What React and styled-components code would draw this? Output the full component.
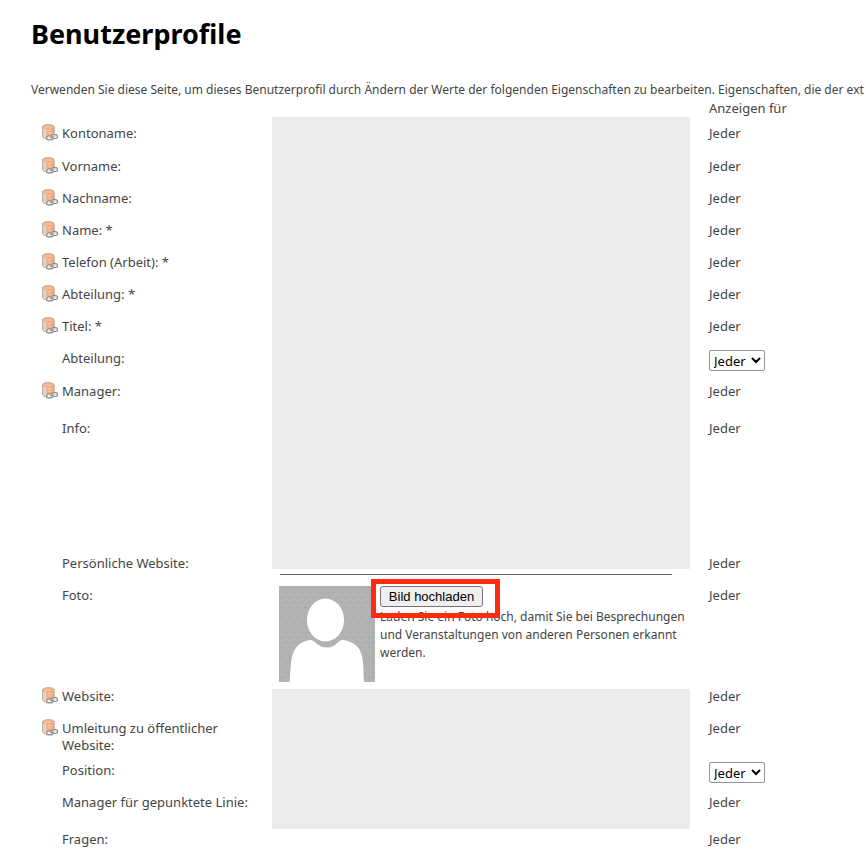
import React, { useState } from 'react';
import styled, { createGlobalStyle } from 'styled-components';

const firstRows = [
  { label: 'Kontoname:', synced: true, height: 33 },
  { label: 'Vorname:', synced: true },
  { label: 'Nachname:', synced: true },
  { label: 'Name: *', synced: true },
  { label: 'Telefon (Arbeit): *', synced: true },
  { label: 'Abteilung: *', synced: true },
  { label: 'Titel: *', synced: true },
  { label: 'Abteilung:', editable: true, height: 33 },
  { label: 'Manager:', synced: true, height: 37 },
  { label: 'Info:', height: 135 },
  { label: 'Persönliche Website:' },
];

const lastRows = [
  { label: 'Website:', synced: true },
  { label: 'Umleitung zu öffentlicher Website:', synced: true, height: 42 },
  { label: 'Position:', editable: true },
  { label: 'Manager für gepunktete Linie:', height: 37 },
  { label: 'Fragen:' },
];

function SyncIcon() {
  return (
    <svg width="16" height="16" viewBox="0 0 16 16" aria-hidden="true">
      <path
        d="M.5 2C.5.6 3-.4 6.300-.4S12.200.6 12.200 2v9.500c0 1.700-2.600 2.600-5.900 2.600S.5 13.200.5 11.500z"
        fill="#f3a878"
        stroke="#b5a092"
        strokeWidth=".8"
      />
      <path d="M1 3c1 .8 2.200 1.200 3.500 1.300v9.400C2.700 13.400 1 12.700 1 11.500z" fill="#ddd4c8" />
      <path d="M1.200 2.100C2 1 4 .4 6.300.4s4.500.6 5.300 1.700c-.8 1-3 1.500-5.300 1.500s-4.300-.5-5.100-1.500z" fill="#edbf9c" />
      <path d="M5.500 5.500h4M5.500 8h4" stroke="#fbd6b8" />
      <rect x="4.700" y="11" width="6.300" height="3.800" rx="1.900" fill="#f2f2f2" stroke="#8c8c8c" strokeWidth="1.200" />
      <rect x="9.700" y="9.700" width="5.800" height="3.800" rx="1.900" fill="#f2f2f2" stroke="#8c8c8c" strokeWidth="1.200" />
      <path d="M8 12.700l4.500-1.200" stroke="#9c9c9c" strokeWidth="1.200" />
    </svg>
  );
}

function Avatar() {
  return (
    <svg width="96" height="96" viewBox="0 0 96 96" role="img" aria-label="Profilfoto">
      <defs>
        <pattern id="dots" width="8" height="10" patternUnits="userSpaceOnUse">
          <rect width="8" height="10" fill="#b1b2b4" />
          <rect x="2" y="1" width="1" height="1" fill="#97999c" />
          <rect x="6" y="6" width="1" height="1" fill="#97999c" />
        </pattern>
      </defs>
      <rect width="96" height="96" fill="url(#dots)" />
      <ellipse cx="46.500" cy="34" rx="18.500" ry="21.500" fill="#fff" />
      <path
        d="M10.500 96C11.500 85 11.500 77 13.500 69C16 60 23 55 31 54C37 54 38 61.500 48 61.500C58 61.500 58 54 64 54C73 55 80 60 82.500 68C85 77 84 86 85 96z"
        fill="#fff"
      />
    </svg>
  );
}

function ProfileRow({ row, children }) {
  const [visibility, setVisibility] = useState('Jeder');

  return (
    <Row $height={row.height}>
      <LabelCell scope="row">
        <Label>
          <IconSlot>{row.synced && <SyncIcon />}</IconSlot>
          <span>{row.label}</span>
        </Label>
      </LabelCell>
      {children}
      <VisibilityCell>
        {row.editable ? (
          <Select
            aria-label={`${row.label} Anzeigen für`}
            value={visibility}
            onChange={(e) => {
              setVisibility(e.target.value);
            }}
          >
            <option>Jeder</option>
            <option>Nur ich</option>
          </Select>
        ) : (
          'Jeder'
        )}
      </VisibilityCell>
    </Row>
  );
}

function App() {
  return (
    <Page>
      <GlobalStyle />
      <Title>Benutzerprofile</Title>
      <Intro>
        Verwenden Sie diese Seite, um dieses Benutzerprofil durch Ändern der Werte der folgenden
        Eigenschaften zu bearbeiten. Eigenschaften, die der ext
      </Intro>
      <ProfileTable>
        <colgroup>
          <LabelCol />
          <ValueCol />
          <col />
        </colgroup>
        <thead>
          <tr>
            <td colSpan={2} />
            <HeadCell scope="col">Anzeigen für</HeadCell>
          </tr>
        </thead>
        <tbody>
          {firstRows.map((row, i) => (
            <ProfileRow key={row.label} row={row}>
              {i === 0 && (
                <ValueCell rowSpan={firstRows.length}>
                  <Block $height={452} />
                  <Divider />
                </ValueCell>
              )}
            </ProfileRow>
          ))}
          <ProfileRow row={{ label: 'Foto:', height: 101 }}>
            <ValueCell>
              <Photo>
                <Avatar />
                <PhotoText>
                  <UploadWrap>
                    <UploadButton type="button">Bild hochladen</UploadButton>
                    <Highlight />
                  </UploadWrap>
                  <Hint>
                    Laden Sie ein Foto hoch, damit Sie bei Besprechungen und Veranstaltungen von
                    anderen Personen erkannt werden.
                  </Hint>
                </PhotoText>
              </Photo>
            </ValueCell>
          </ProfileRow>
          {lastRows.map((row, i) => (
            <ProfileRow key={row.label} row={row}>
              {i === 0 && (
                <ValueCell rowSpan={lastRows.length}>
                  <Block $height={140} $top={9} />
                </ValueCell>
              )}
            </ProfileRow>
          ))}
        </tbody>
      </ProfileTable>
    </Page>
  );
}

export default App;

const GlobalStyle = createGlobalStyle`
  * {
    box-sizing: border-box;
  }
  body {
    margin: 0;
    background-color: #fff;
    color: #444;
    font-family: 'Noto Sans', 'Open Sans', sans-serif;
    font-size: 13px;
    line-height: 17px;
  }
`;

const Page = styled.main`
  padding: 16px 0 0 31px;
  overflow: hidden;
`;

const Title = styled.h1`
  margin: 0 0 28px;
  color: #000;
  font-size: 27px;
  line-height: 36px;
`;

const Intro = styled.p`
  margin: 0;
  font-size: 12px;
  line-height: 19px;
  white-space: nowrap;
`;

const ProfileTable = styled.table`
  width: 100%;
  table-layout: fixed;
  border-collapse: collapse;

  td,
  th {
    padding: 0;
    font-weight: normal;
    text-align: left;
    vertical-align: top;
  }
`;

const LabelCol = styled.col`
  width: 241px;
`;

const ValueCol = styled.col`
  width: 418px;
`;

const Row = styled.tr`
  height: ${(props) => props.$height || 32}px;
`;

const HeadCell = styled.th`
  && {
    padding: 1px 0 0 19px;
  }
`;

const LabelCell = styled.th`
  && {
    padding: 8px 16px 0 11px;
  }
`;

const Label = styled.div`
  display: flex;
  gap: 4px;
`;

const IconSlot = styled.span`
  flex: 0 0 16px;
  height: 16px;

  svg {
    display: block;
    overflow: visible;
  }
`;

const ValueCell = styled.td``;

const VisibilityCell = styled.td`
  && {
    padding: 8px 0 0 19px;
  }
`;

const Block = styled.div`
  height: ${(props) => props.$height}px;
  margin-top: ${(props) => props.$top || 0}px;
  background-color: #ebebeb;
`;

const Divider = styled.hr`
  margin: 5px 18px 0 8px;
  border: 0;
  border-top: 1px solid #666;
`;

const Photo = styled.div`
  display: flex;
  gap: 5px;
  height: 101px;
  padding: 7px 0 0 7px;

  svg {
    flex: none;
    display: block;
  }
`;

const PhotoText = styled.div`
  flex: 1;
`;

const UploadWrap = styled.div`
  position: relative;
  width: 103px;
  margin-bottom: 1px;
`;

const UploadButton = styled.button`
  display: block;
  width: 100%;
  height: 21px;
  padding: 0;
  border: 1px solid #767676;
  border-radius: 3px;
  background-color: #efefef;
  color: #000;
  font-family: 'Liberation Sans', Arial, sans-serif;
  font-size: 13px;
  cursor: pointer;
`;

/* red frame drawn around the upload button */
const Highlight = styled.span`
  position: absolute;
  inset: -7px -17px -11px -9px;
  border: 5px solid #ff2d0c;
  pointer-events: none;
`;

const Hint = styled.p`
  margin: 0;
  font-size: 12px;
  line-height: 18px;
`;

const Select = styled.select`
  display: block;
  width: 56px;
  height: 21px;
  padding: 0;
  border: 1px solid #949494;
  border-radius: 2px;
  background-color: #fff;
  color: #000;
  font-family: inherit;
  font-size: 13px;
`;
